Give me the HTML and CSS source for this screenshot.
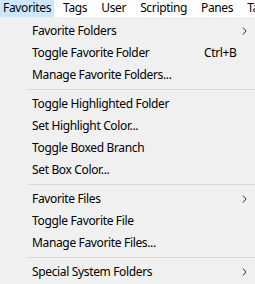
FILE: index.html
```html
<!DOCTYPE html>
<html lang="en">
<head>
    <meta charset="UTF-8">
    <title>Favorites menu</title>
    <link rel="stylesheet" href="styles.css">
</head>
<body>
    <!-- menu bar -->
    <div class="menubar">
        <span class="bar-item active">Favorites</span>
        <span class="bar-item">Tags</span>
        <span class="bar-item">User</span>
        <span class="bar-item">Scripting</span>
        <span class="bar-item">Panes</span>
        <span class="bar-item">Ta</span>
    </div>

    <!-- dropdown -->
    <div class="menu">
        <div class="item">Favorite Folders
            <svg class="arrow" width="5" height="8" viewBox="0 0 5 8"><polyline points="1,0.5 4,4 1,7.5" /></svg>
        </div>
        <div class="item">Toggle Favorite Folder<span class="key">Ctrl+B</span></div>
        <div class="item">Manage Favorite Folders...</div>
        <div class="sep"></div>
        <div class="item">Toggle Highlighted Folder</div>
        <div class="item">Set Highlight Color...</div>
        <div class="item">Toggle Boxed Branch</div>
        <div class="item">Set Box Color...</div>
        <div class="sep"></div>
        <div class="item">Favorite Files
            <svg class="arrow" width="5" height="8" viewBox="0 0 5 8"><polyline points="1,0.5 4,4 1,7.5" /></svg>
        </div>
        <div class="item">Toggle Favorite File</div>
        <div class="item">Manage Favorite Files...</div>
        <div class="sep"></div>
        <div class="item">Special System Folders
            <svg class="arrow" width="5" height="8" viewBox="0 0 5 8"><polyline points="1,0.5 4,4 1,7.5" /></svg>
        </div>
    </div>
</body>
</html>
```

FILE: styles.css
```css
body {
    margin: 0;
    width: 255px;
    height: 284px;
    overflow: hidden;
    background: #f0f0f0;
    font-family: "Noto Sans", "Liberation Sans", sans-serif;
    font-size: 12px;
    letter-spacing: -0.35px;
    color: #000;
}

/* menu bar */
.menubar {
    display: flex;
    height: 17px;
    background: #fff;
    white-space: nowrap;
    overflow: hidden;
}

.bar-item {
    padding: 0 7px;
    line-height: 16px;
    flex-shrink: 0;
}

.bar-item.active {
    background: #cce8ff;
    padding: 0 3px;
    margin-right: 2px;
}

/* dropdown */
.menu {
    padding-top: 3px;
}

.item {
    position: relative;
    height: 22px;
    line-height: 22px;
    padding-left: 32px;
    white-space: nowrap;
}

.key {
    position: absolute;
    left: 204px;
    top: 0;
}

.arrow {
    position: absolute;
    left: 242px;
    top: 7px;
    fill: none;
    stroke: #333;
    stroke-width: 1;
}

.sep {
    height: 1px;
    margin: 3px 0 3px 28px;
    background: #d7d7d7;
}
```
